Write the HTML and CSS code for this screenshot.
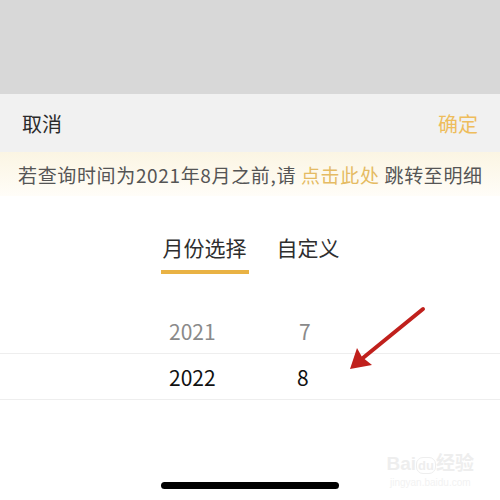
FILE: index.html
```html
<!DOCTYPE html>
<html lang="zh-CN">
<head>
<meta charset="utf-8">
<link rel="stylesheet" href="styles.css">
</head>
<body>
<div class="screen">
  <div class="overlay"></div>
  <div class="sheet">
    <div class="header">
      <span class="cancel">取消</span>
      <span class="confirm">确定</span>
    </div>
    <div class="notice">若查询时间为2021年8月之前,请 <span class="link">点击此处</span> 跳转至明细</div>
    <div class="tabs">
      <div class="tab active">月份选择</div>
      <div class="tab">自定义</div>
    </div>
    <div class="picker">
      <div class="row dim"><span class="year">2021</span><span class="month">7</span></div>
      <div class="row selected"><span class="year">2022</span><span class="month">8</span></div>
    </div>
    <div class="bottom">
      <div class="home"></div>
      <div class="watermark"><span class="wm-big">Bai<span class="wm-du">du</span>经验</span><span class="wm-small">jingyan.baidu.com</span></div>
    </div>
  </div>
  <svg class="arrow" width="500" height="500" viewBox="0 0 500 500">
    <line x1="423" y1="309" x2="358" y2="362" stroke="#c0201c" stroke-width="4" stroke-linecap="round"/>
    <polygon points="350,369 357,348 362,357 372,365" fill="#c0201c"/>
  </svg>
</div>
</body>
</html>
```
FILE: styles.css
```css
html, body {
  margin: 0;
  padding: 0;
  background: #ffffff;
}
.screen {
  position: relative;
  width: 500px;
  height: 500px;
  overflow: hidden;
  font-family: "Noto Sans CJK SC", "Noto Sans", sans-serif;
  display: flex;
  flex-direction: column;
}
.overlay {
  height: 94px;
  background: #d8d8d8;
  flex: none;
}
.sheet {
  flex: 1;
  display: flex;
  flex-direction: column;
  background: #ffffff;
}
.header {
  height: 58px;
  background: #f1f1f1;
  display: flex;
  justify-content: space-between;
  align-items: center;
  padding: 0 22px;
  font-size: 20px;
}
.cancel {
  color: #2a2a2a;
}
.confirm {
  color: #eebd5c;
}
.notice {
  height: 44px;
  display: flex;
  align-items: center;
  padding: 0 18px;
  font-size: 19px;
  color: #555555;
  white-space: pre;
  letter-spacing: 0.65px;
  background: linear-gradient(to bottom, #fbf5e3, #fffdf8);
}
.link {
  color: #e5bb63;
}
.tabs {
  display: flex;
  justify-content: center;
  gap: 30px;
  padding-top: 36px;
  padding-left: 2px;
}
.tab {
  font-size: 21px;
  color: #2e2e2e;
  line-height: 30px;
  padding-bottom: 10px;
  position: relative;
}
.tab.active::after {
  content: "";
  position: absolute;
  left: -2px;
  right: -2px;
  bottom: -2px;
  height: 4px;
  background: #e9b244;
}
.picker {
  margin-top: 36px;
  display: flex;
  flex-direction: column;
}
.row {
  box-sizing: border-box;
  height: 46px;
  display: flex;
  align-items: center;
  font-size: 21px;
  border-bottom: 1px solid #eeeeee;
}
.row.dim {
  color: #8a8a8a;
}
.row.selected {
  color: #111111;
}
.year {
  width: 48px;
  margin-left: 169px;
}
.month {
  margin-left: 80px;
}
.dim .month {
  margin-left: 82px;
}
.bottom {
  flex: 1;
  display: flex;
  justify-content: center;
  align-items: flex-end;
  padding-bottom: 11px;
  position: relative;
}
.home {
  width: 178px;
  height: 7px;
  border-radius: 4px;
  background: #000000;
}
.watermark {
  position: absolute;
  right: 26px;
  bottom: 10px;
  display: flex;
  flex-direction: column;
  align-items: center;
  color: #eeeeee;
  font-family: "Liberation Sans", "Noto Sans CJK SC", sans-serif;
}
.wm-big {
  font-size: 19px;
  font-weight: bold;
  line-height: 20px;
}
.wm-du {
  font-size: 13px;
  border: 1px solid #eeeeee;
  border-radius: 7px;
  padding: 0 1px;
}
.wm-small {
  font-size: 10px;
  line-height: 14px;
  color: #f2f2f2;
}
.arrow {
  position: absolute;
  left: 0;
  top: 0;
  pointer-events: none;
}
```
